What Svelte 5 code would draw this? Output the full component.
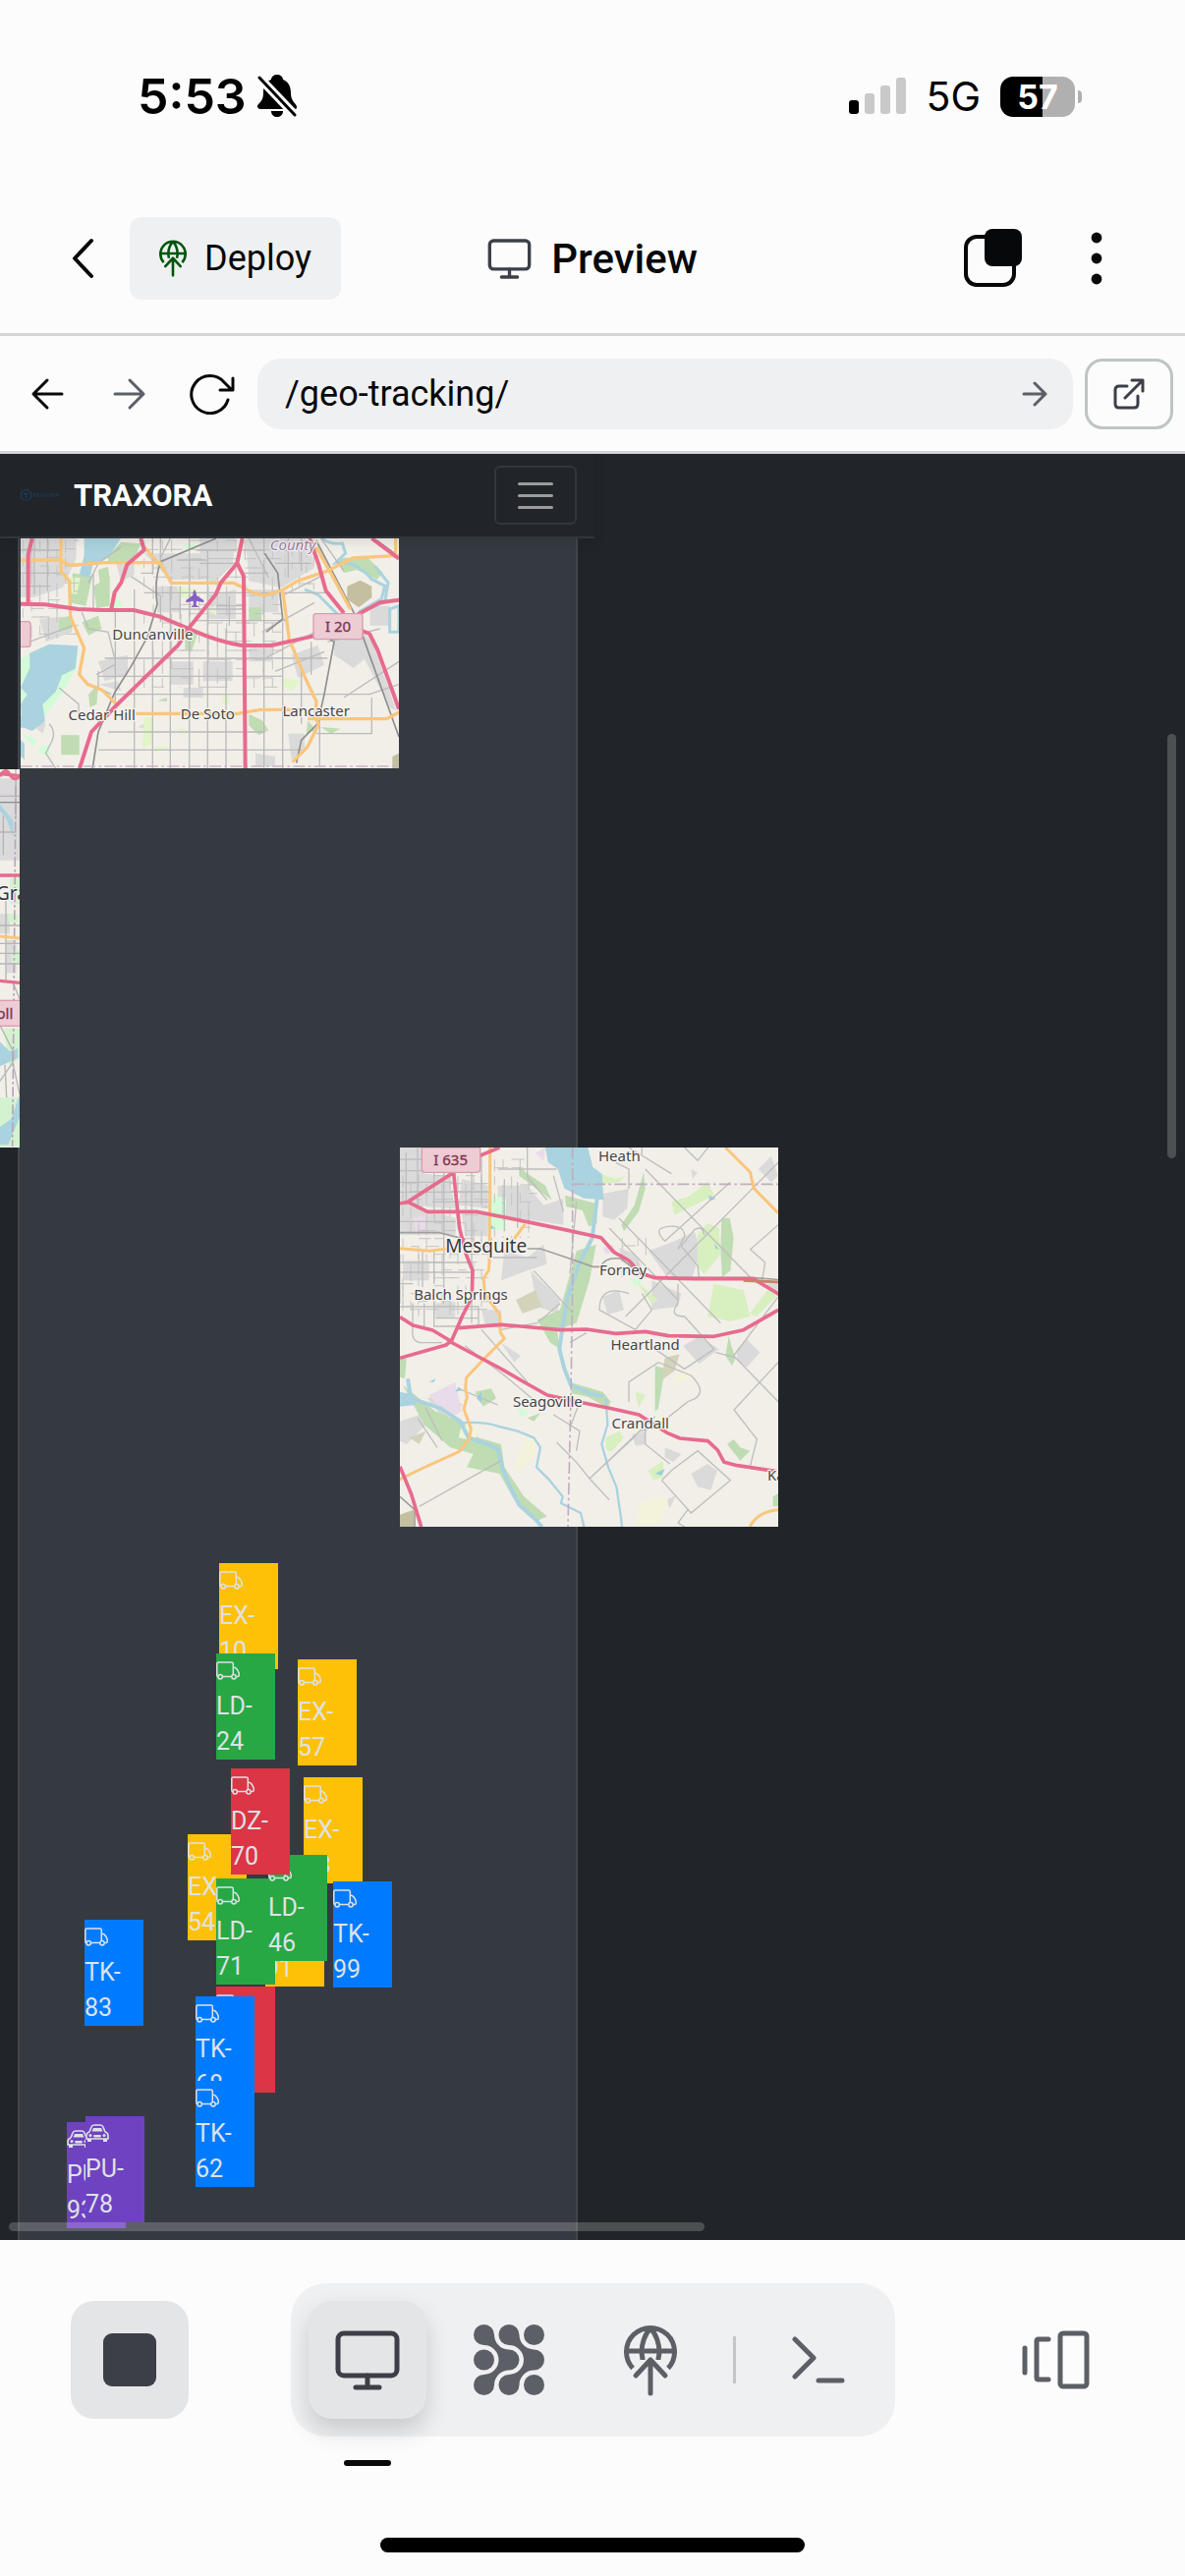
<script>
  let path = $state('/geo-tracking/');

  const markers = [
    { type: 'EX', num: '10', x: 223, y: 1129 },
    { type: 'LD', num: '24', x: 220, y: 1221 },
    { type: 'EX', num: '57', x: 303, y: 1227 },
    { type: 'EX', num: '43', x: 309, y: 1347 },
    { type: 'EX', num: '54', x: 191, y: 1405 },
    { type: 'EX', num: '91', x: 270, y: 1452 },
    { type: 'LD', num: '71', x: 220, y: 1450 },
    { type: 'LD', num: '46', x: 273, y: 1426 },
    { type: 'DZ', num: '70', x: 235, y: 1338 },
    { type: 'TK', num: '99', x: 339, y: 1453 },
    { type: 'TK', num: '83', x: 86, y: 1492 },
    { type: 'DZ', num: '33', x: 220, y: 1560 },
    { type: 'TK', num: '68', x: 199, y: 1570 },
    { type: 'TK', num: '62', x: 199, y: 1656 },
    { type: 'PU', num: '93', x: 68, y: 1698 },
    { type: 'PU', num: '78', x: 87, y: 1692 }
  ];

  const southLabels = [
    { t: 'Duncanville', x: 466, y: 333 },
    { t: 'Cedar Hill', x: 311, y: 580 },
    { t: 'De Soto', x: 634, y: 577 },
    { t: 'Lancaster', x: 965, y: 566 }
  ];

  const eastLabels = [
    { t: 'Heath', x: 691, y: 66 },
    { t: 'Forney', x: 702, y: 414 },
    { t: 'Balch Springs', x: 207, y: 488 },
    { t: 'Heartland', x: 770, y: 643 },
    { t: 'Seagoville', x: 472, y: 816 },
    { t: 'Crandall', x: 755, y: 881 }
  ];

  // Short residential streets scattered over an area, as one path.
  function streets(x0, y0, x1, y1, step) {
    let d = '';
    let n = 7;
    for (let x = x0; x < x1; x += step) {
      for (let y = y0; y < y1; y += step) {
        n = (n * 73 + 41) % 997;
        if (n % 3 === 0) d += `M${x} ${y}v${Math.min(step + (n % 20), y1 - y)}`;
        else if (n % 3 === 1) d += `M${x} ${y}h${Math.min(step + (n % 20), x1 - x)}`;
      }
    }
    return d;
  }
</script>

{#snippet globe()}
  <path d="M9 44.5A24.5 24.5 0 1 1 45 44.5M3 27h48M27 4C21 10 18 20 18 28c0 3 1 5 1 8M27 4c6 6 9 16 9 24 0 3-1 5-1 8" />
  <path d="M27 70V37M12 52l15-16 15 16" stroke-linecap="round" stroke-linejoin="round" />
{/snippet}

{#snippet monitor()}
  <rect x="3" y="3" width="60" height="43" rx="6" />
  <path d="M33 46v12M21 58h24" stroke-linecap="round" />
{/snippet}

<div class="screen">
  <div class="status">
    <div class="clock">
      <span>5:53</span>
      <svg width="40" height="44" viewBox="0 0 40 44" aria-hidden="true">
        <path d="M20 0c3 0 6 2 6 5 6 2 8 8 8 14 0 9 6 10 6 14 0 2-1 2-3 2H3c-3 0-4-3-2-5 3-3 5-5 5-12 0-8 3-11 8-13 0-3 3-5 6-5zM14 37h12c0 4-3 6-6 6s-6-2-6-6z" />
        <path d="M-2-1L42 45" stroke="#fcfcfc" stroke-width="9" />
        <path d="M2 3l36 38" stroke="#000" stroke-width="3" stroke-linecap="round" />
      </svg>
    </div>
    <div class="radio">
      <svg width="58" height="38" viewBox="0 0 58 38" aria-hidden="true">
        <rect y="23" width="10" height="14" rx="3" />
        <g fill="#c9c9c9">
          <rect x="16" y="16" width="10" height="21" rx="3" />
          <rect x="32" y="8" width="10" height="29" rx="3" />
          <rect x="48" width="10" height="37" rx="3" />
        </g>
      </svg>
      <span class="network">5G</span>
      <div class="battery"><span class="level">57</span></div>
    </div>
  </div>

  <header class="header">
    <div class="left">
      <button class="plain" aria-label="Back">
        <svg width="24" height="42" viewBox="0 0 24 42" class="line ink"><path d="M21 3L4 21l17 18" /></svg>
      </button>
      <button class="deploy">
        <svg width="28" height="38" viewBox="0 0 54 73" class="globe green">{@render globe()}</svg>
        Deploy
      </button>
    </div>
    <h1>
      <svg width="45" height="41" viewBox="0 0 66 61" class="monitor">{@render monitor()}</svg>
      Preview
    </h1>
    <div class="right">
      <button class="plain" aria-label="Tabs">
        <svg width="60" height="60" viewBox="0 0 60 60">
          <rect x="2" y="8" width="49" height="49" rx="11" fill="none" stroke="#060809" stroke-width="4" />
          <rect x="21" width="38" height="38" rx="8" fill="#060809" />
        </svg>
      </button>
      <button class="plain" aria-label="More">
        <svg width="12" height="54" viewBox="0 0 12 54" fill="#060809">
          <circle cx="6" cy="6" r="5.4" /><circle cx="6" cy="27" r="5.4" /><circle cx="6" cy="48" r="5.4" />
        </svg>
      </button>
    </div>
  </header>

  <nav class="toolbar" aria-label="Browser">
    <div class="history">
      <button class="plain" aria-label="Go back">
        <svg width="34" height="34" viewBox="0 0 34 34" class="line ink"><path d="M32 17H3M17 3L3 17l14 14" /></svg>
      </button>
      <button class="plain" aria-label="Go forward">
        <svg width="34" height="34" viewBox="0 0 34 34" class="line grey"><path d="M2 17h29M17 3l14 14-14 14" /></svg>
      </button>
      <button class="plain" aria-label="Reload">
        <svg width="46" height="42" viewBox="0 0 46 42" class="line ink"><path d="M39 27A19 19 0 1 1 35 9l8 8M44 5v12H31" /></svg>
      </button>
    </div>
    <div class="url">
      <input aria-label="Path" bind:value={path} />
      <button class="plain" aria-label="Go">
        <svg width="26" height="26" viewBox="0 0 26 26" class="line grey"><path d="M2 13h22M13 2l11 11-11 11" /></svg>
      </button>
    </div>
    <button class="external" aria-label="Open in new tab">
      <svg width="32" height="32" viewBox="0 0 32 32" class="line dark"><path d="M14 8H6q-4 0-4 4v14q0 4 4 4h15q4 0 4-4V18M12 20L30 2M19 2h11v11" /></svg>
    </button>
  </nav>

  <main class="viewport">
    <div class="panel"></div>

    <svg class="tile south" viewBox="63 24 1155 702" font-family="Noto Sans, sans-serif">
      <rect x="63" y="24" width="1155" height="702" fill="#f2efe9" />
      <g fill="#dadada">
        <path d="M63 24h170v60l-40 90-90 30H63zM350 85l60-10v60l-40 20zM440 70h220v80H520zM480 170h70v80h-70zM610 24h110l-10 80-60 60-40-40zM750 24h190l20 90-100 60-100-20zM760 180h90v70h-90zM760 360l80-20-10 60h-70zM890 380l80-30 20 60-80 40zM1020 320l90-10 40 50-70 60-60-40zM300 400l90-20v60l-70 20zM520 400h70v70h-70zM620 400h90v60h-90zM640 200l80-20v90h-80zM120 270l100-10v50l-80 30zM420 600l40-20v30zM300 470l60-10 10 30zM560 480h60v30h-60zM1130 230h60v60h-60zM1100 300l40 50 70 200-20-10-110-210zM880 620h50v50l-40 30zM780 680l60 10v30h-60zM70 540l70 50-10 30-60-50z" />
      </g>
      <g fill="#bfdcb3">
        <path d="M330 75l40-40 60 5-20 50-80 10zM222 130l60 10-20 90-50-10zM285 170l50-30v90l-40 8zM250 280l50-20 10 40-40 20zM180 270l40-10v40l-40 10zM1030 85l90-5 50 50-20 20-60-30-40 10zM187 625h55v60h-55zM760 235h38v38h-38zM760 560l40 20 20 30-30 15-30-30zM270 500l30-30-5 60-20 10zM565 320l40-10-20 60-20-5zM980 600l60 5-30 15zM940 580l25 30-30 10zM300 120l30-10 5 40-30 10zM480 520l30-10v12z" />
      </g>
      <g fill="#d3fbd8"><path d="M63 390l90-45 85 15-5 60-40 70-65 90-40 15-25-20zM350 200l30 30-35 10zM210 370l20 60-15 10zM66 620l50 20-15 20zM120 660l30-5v30h-25zM560 40l40 5-30 20zM430 640l20 10-10 20z" /></g>
      <g fill="#e2f5c8"><path d="M205 140l40 5-10 50-25-5zM540 170l60 10-20 30-30-5zM870 450l50 10-30 30-30-20zM630 240l30-10v30zM470 660h40v8h-40zM440 570h25v80l-30 15zM540 600l30 10-20 15zM680 500h18v30h-18z" /></g>
      <g fill="#aad3df">
        <path d="M257 24h112l-40 60-45 20-10 40-32-8 15-60zM90 375l60-28 88 5-8 70-40 20-20 50-40 40 8 50-40 30-30-12-5-70 20-30-20-20 28-60zM63 640l12 10v50l-12-10zM63 565l30 10 10 25-40 2z" />
        <path d="M985 24q20 20 60 15l10 30-30 30q60-10 110 50l40 20-10 40-70 40 80-30 10-60-40-50M930 180l40 15 30 30 40 40M1190 240l28-10v80h-28z" fill="none" stroke="#aad3df" stroke-width="9" />
      </g>
      <path d="M1060 170l40-18 35 18v35l-40 30-35-25zM1198 690l20-10v46h-20z" fill="#c4bfa0" />
      <path d={streets(440, 30, 860, 480, 28) + streets(70, 30, 240, 330, 26) + streets(870, 30, 960, 180, 22)} fill="none" stroke="#c4c4c4" stroke-width="3" />
      <g fill="none" stroke="#bbb" stroke-width="4">
        <path d="M105 24v170M145 24v160M63 60h120M63 130h120M63 170h90M352 240v340M410 180v546M466 24v110M466 320v406M520 170v556M578 24v702M634 60v666M690 300v426M806 24v50M806 90v636M863 280v446M920 420v170M976 560v160M440 190h560M430 130h40M520 240h230M600 275h280M320 390h680M300 445h560M350 500h780M330 615h480M300 670h620M1050 510l168-110M600 60h120M610 100h110M740 60h70M740 130h80M1135 510v110h-170M860 200l120-60M800 310l160-90M810 390l170-90M840 430l150-60M950 340v100M1000 340l160-40M980 24l70 100M700 200v90M660 230h80M550 170v100M490 24v80M540 90h90M760 24l60 120M880 24v120M920 24v100M850 60h100M840 100h110" />
        <path d="M63 350l160-60M270 160l30-60 70-50M150 590q20 20 10 50l-20 40 30 46M295 440l55-30M300 430v50l40 20M250 250l20 50 60 10 20 80M400 140l90 60v80M285 130v110M180 480l60 50v30M520 24l-30 60M1218 470l-90 30" />
      </g>
      <g fill="none" stroke="#8f8f8f" stroke-width="5">
        <path d="M660 24L490 95q-20 60-10 130l-30 100-50 90-50 80-50 120-25 160M808 70l40 60 15 140-50 40M1005 330l15 10-30 160-20 90-50 50-15 70M965 30l120 230 133 370M1150 30l68 50" />
      </g>
      <path d="M63 720H1218" fill="none" stroke="#c8b4c8" stroke-width="4" stroke-dasharray="36 10 8 10" />
      <g fill="none" stroke="#f9c67d" stroke-width="10" stroke-linejoin="round">
        <path d="M63 90h120l30 16 110-8h165l35 62h190l60 30 35 8 50-14 50-30 90-30 80-40 140-8M186 24v100l26 30 3 110 42 95-15 80 25 30 45 18 50 50M440 50l48 55M863 182l20 150 50 120 33 70-3 50 10 20-35 70-45 45M965 50l45 80 60 110M415 559h310l70-12h130M940 575h240l38-20M1208 24v45" />
      </g>
      <g fill="none" stroke="#e76b8d" stroke-width="12" stroke-linejoin="round">
        <path d="M98 24l-12 50v145M430 24l10 35-52 45-18 55-20 30-10 50M63 224l75 2 100 14 70 3h100l80 20 100 42q80 35 150 46h90l100-22 60-14M740 24l-16 75 20 40 5 587M724 100l-50 60-15 35-80 100-35 55-190 185-75 80-36 111M945 24l28 80 22 80 55 68M1085 260l75-40 58-8M1090 300l38 15 25 50 65 180M1135 24l83 62" />
      </g>
      <g fill="#edccd4" stroke="#d99caf" stroke-width="4"><rect x="957" y="254" width="150" height="78" rx="8" /><rect x="40" y="278" width="53" height="77" rx="8" /></g>
      <path d="M594 180q-6 8-5 18l-21 15v7l22-5 1 12-8 7h24l-8-7 1-12 22 5v-7l-22-15q0-10-6-18z" fill="#8461c4" />
      <g text-anchor="middle" class="halo" font-size="45" fill="#464646">
        {#each southLabels as l}<text x={l.x} y={l.y}>{l.t}</text>{/each}
        <text x="894" y="60" font-style="italic" fill="#9b7fa8">County</text>
      </g>
      <text x="1032" y="310" text-anchor="middle" font-size="45" fill="#7d3350" stroke="#7d3350">I 20</text>
    </svg>

    <svg class="tile west" viewBox="0 38 60 1155" preserveAspectRatio="xMinYMin slice" font-family="Noto Sans, sans-serif">
      <rect y="38" width="60" height="1155" fill="#f2efe9" />
      <path d="M0 66h60v250H0zM0 480h30v60H0zM20 560h30v100H20z" fill="#dadada" />
      <path d="M30 370h30v80H30zM25 480h30v25H25zM35 590h25v40H35zM10 830h50v90l-30 30zM0 1040h60v150H0z" fill="#d3f2cf" />
      <path d="M0 145l40 50v50L20 190 0 165zM0 870l30 30 25-10v30l-55 25zM60 1030v70l-35 85H0v-55l35-25z" fill="#aad3df" />
      <path d="M0 120h60M10 180v120M0 230h50M18 440v240M0 515h60M0 570h60M0 600h60M0 632h60M40 690l20 50M0 820l38 75v40L0 990M15 940l5 100M38 930l22 100M48 38v150" fill="none" stroke="#b5b5b5" stroke-width="4" />
      <path d="M0 139h60" stroke="#8f8f8f" stroke-width="4" />
      <path d="M48 90L38 1190" stroke="#b9a5b9" stroke-width="5" stroke-dasharray="30 8 8 8" />
      <path d="M0 548l60 6" stroke="#f9c67d" stroke-width="9" />
      <path d="M0 52l60 6M0 362h60M0 684l60 6" stroke="#e76b8d" stroke-width="10" />
      <path d="M0 60q15-30 30-6t30 4" fill="none" stroke="#e76b8d" stroke-width="10" />
      <rect x="-60" y="744" width="130" height="78" fill="#edccd4" stroke="#d99caf" stroke-width="4" />
      <text x="-12" y="438" font-size="57" fill="#333" class="halo">Gra</text>
      <text x="40" y="801" text-anchor="end" font-size="45" fill="#7d3350" stroke="#7d3350">Toll</text>
    </svg>

    <svg class="tile east" viewBox="21 24 1155 1158" font-family="Noto Sans, sans-serif">
      <rect x="21" y="24" width="1155" height="1158" fill="#f2efe9" />
      <g fill="#dadada">
        <path d="M21 24h75v80l80 10-10 60-145 60zM100 110h70l20 100-90-5zM210 120l80 20v70l-90-10zM210 225h80v70h-70zM320 140h90l50 60 60-20v80l-200-30zM21 210h70l100 30v50H21zM340 340l70 20 50-40 10 60-60 20-80 30zM420 400l90 90-10 40-60-20zM640 165l80-15-5 60-40 35-35-10zM780 340l80-30 60-30 20 60-30 90-80-20zM690 330l50 20 20 40-60-20zM790 430l90 40-10 40-80 10zM885 630l50-30 60 40-60 45zM1050 640l30-30 40 40-40 45-30-20zM1115 90l40-40 20 60-20 20zM910 1020l50-30 30 20-20 60-40-10zM830 940l50 20-25 25-25-15zM105 790l50-20 60 40-70 30zM21 860l60-20 20 30-60 60-20-10zM270 520h60v60l-50-20zM730 900l40-10v40l-30 5zM835 1100l30-15-20 40zM910 90l20 10-15 20zM330 620l60 40-20 20zM640 480l50-20 15 60-50 15zM130 500l60-5v50h-60zM30 370h80v60H30zM1140 440h36v40z" />
      </g>
      <g fill="#bfdcb3">
        <path d="M385 80l20 20 60 40 20 45-60-45-40-30zM525 170l95 25 3 60-25 10-20-50-50-10zM765 100l5 50-20 70-45 60-8-20 40-60zM1003 240h25l12 60-10 100-25 20-5-80zM560 340l60-20-20 110-40 130-60 20 10 60-30-20-40-70 70-30zM21 660l20 10-5 60-15-5zM30 750l100 80 70 20 60 60 70 20 10 70 60 90 70 60-30 15-70-65-45-80-100-20 20-40-70-20-80-70zM540 740l100 30 25 30-10 20-60-35-50-10zM800 690l30 10-20 120-10 10zM1020 930l20-15 20 25 30 10-30 30zM410 850l40-15-20 25zM250 770l50-10 15 30-40 25zM1160 1090l16-10v40h-16zM1015 660l10-60 20 70-10 20z" />
      </g>
      <g fill="#d8efbf"><path d="M850 190l50-15 60-45 20 40-80 40-40 20zM930 290l30-35 35 15 5 80-50 60-20-20zM980 440l90 20 20 80-60 15-70-15zM1090 530l60-80 20 30-60 60zM650 910l40-20 15 20-40 45-15-10zM780 1010l45-30v50l-30 10zM620 100l60 20 30-10-20 20-60 5zM740 430l70 60-20 10zM740 770l30 10-20 40z" /></g>
      <g fill="#e9dcea"><path d="M435 40l30-15-5 40zM60 240l40-10v40l-30 10zM110 780l80-40 20 90-40 20zM640 330l30-10 10 20-30 10z" /></g>
      <g fill="#f2f3da"><path d="M370 1000l30-80 40-10-10 60-40 40zM750 1110l60-20 30 10-20 70-80 10zM860 720l50-15-10 30-40 10zM210 870l50 20-10 30-50-10z" /></g>
      <path d="M300 175h45v100h-45zM380 820l40 10-30 20zM720 420l40 10-20 20z" fill="#d3fbd8" />
      <path d="M375 490l60-30 20 50-60 20zM830 665l45-10-15 50-40 30zM50 910l50-20-20 40z" fill="#d3d3bb" />
      <path d="M21 1145l42-15v52H21z" fill="#c4bfa0" />
      <path d="M465 24h130l15 60 28 20 5 80-60-5-60-30-20-60-30-20zM21 770l45 10 5 30-50 5z" fill="#aad3df" />
      <g fill="none" stroke="#aad3df" stroke-linejoin="round">
        <path d="M623 180l-15 120-40 80-35 100-15 90-10 70 15 60 20 50 60 25 40 10" stroke-width="12" />
        <path d="M45 730l10 60 90 30 60 40 25 50 60 20 30 15 15 60 20 50 30 60 50 45 20 22" stroke-width="12" />
        <path d="M200 865q80-5 120 10l60 15 50 20 20 30-12 60 40 40 40 50-5 20 60 30 10 42M650 790l5 80-18 60 20 70 25 60 12 80 5 42" stroke-width="7" />
      </g>
      <path d="M190 770l10-15 12 10zM255 790l15-20v35zM800 1020l30-15-10 20zM980 315l15 20-10-3zM965 170l20 10-20 8zM290 250l20 20-15 5zM110 740l20-10-5 10z" fill="#9bcde0" />
      <path d={streets(30, 110, 290, 540, 24) + streets(310, 60, 440, 300, 26) + streets(700, 300, 780, 420, 24)} fill="none" stroke="#c4c4c4" stroke-width="3" />
      <g fill="none" stroke="#bebebe" stroke-width="4">
        <path d="M40 40v160M75 24v190M125 100v120M155 100v400M240 60v500M270 40v160M340 120v160M380 130v140M21 60h80M21 95h100M21 130h160M21 160h280M120 190h180M21 250h170M21 375h210M21 405h220M21 440h40M60 500v80q-5 40 30 40h60M95 500v70M125 490v80h80M21 510h240v60M130 545h130M21 350v150M90 340v110M125 340v100M300 300v60h140M320 90h180M410 24v90l60 70" />
        <path d="M720 24l130 80M680 70l40 20v60M770 90L1090 420M690 240L1000 560M660 270l210 220M1176 70L710 540M830 310q-40-40 10-45t50 30l-20 40M950 290q-5-30-30-15l-40 50 50 60 5 40M720 470q-90-30-90 50l110 60 50-60-30-50M870 440v60q-30 40 20 40l90 100-90 60-90-60M1176 680l-135 145 70 90-20 80M1040 660l136-180M1040 660l136 140M985 650l60 15M600 1035l200-190M600 1035l60 65M720 800v-60l90-60 100 40q60 60-10 80l-100 80-50 10M500 925l60 60 40 50 140-130M490 840l80 50-10 60M570 800l-30 80M1176 260l-85 75 45 40-10 60M890 24l40 40 40-50M830 310l200-180M820 1040l30-30 80-60 100 90-120 100-90-100M900 1130l-30 40 20 12M340 720l120 100M200 760l120 50M270 580l140 160M330 580l110-20 70-60M430 400l120 130M540 620l50-30M770 880v50l75 60M80 1120l250-140M75 850l60 90M21 1040l30-20M100 820l50 100M490 110l30 110M760 24v20M220 630l120 90M560 190l-20 220" />
      </g>
      <g fill="none" stroke="#a0a09c" stroke-width="5"><path d="M21 284h120l80 20M410 333h40l80 27 80 28h25q10-30 60-25l40 30 60 28h300l100 8M21 1090l45 40v52" /></g>
      <path d="M548 24v430l-5 330-9 398M548 136h628" fill="none" stroke="#c0aec0" stroke-width="5" stroke-dasharray="36 10 8 10" />
      <g fill="none" stroke="#f9c67d" stroke-width="9" stroke-linejoin="round">
        <path d="M296 24v150l-2 200-2 25-16 25 5 50 45 60 2 55 12 18-60 60-56 60-3 30 5 30-10 35 22 60-5 30-30 40-110 50-72 35M403 258l-33 45M21 332l90 8 60-8M1015 24l75 75 12 50 74 75M1090 1182q20-45 86-52" />
      </g>
      <g fill="none" stroke="#e76b8d" stroke-width="11" stroke-linejoin="round">
        <path d="M325 24l-60 25M185 100L45 190l-24 5M45 190l60 30h150l150 30 130 27 100 22 40 45 45 25 35 38 45 15 120 3h180l96 58M185 100l8 80 10 90 20 80 20 50-2 80-30 60-35 80M21 542l40 25 60 15 55 33-14 12-141 40M200 575l130-10 60 5 120 11 80-2 90 13 90-6 70 13 140 2 90-20 106-61M176 618l160 85 60 35 75 42 100 22 100 20 80 18 85 55 40 17 85 8 30 28 20 37 40 10 120 18M21 998l35 85 30 99" />
      </g>
      <path d="M1070 430l106 5" stroke="#c8836f" stroke-width="9" />
      <path d="M88 24h178v66q0 10-10 10H98q-10 0-10-10z" fill="#edccd4" stroke="#d99caf" stroke-width="4" />
      <g text-anchor="middle" class="halo" font-size="45" fill="#464646">
        {#each eastLabels as l}<text x={l.x} y={l.y}>{l.t}</text>{/each}
        <text x="284" y="346" font-size="57" fill="#3a3a3a">Mesquite</text>
        <text x="1143" y="1042" text-anchor="start">Kaufman</text>
      </g>
      <text x="176" y="79" text-anchor="middle" font-size="45" fill="#7d3350" stroke="#7d3350">I 635</text>
    </svg>

    {#each markers as m}
      <div class="marker {m.type}" style="left:{m.x}px;top:{m.y}px">
        <span class="glyph">
          <svg width="24" height="20" viewBox="0 0 24 20">
            {#if m.type === 'PU'}
              <g fill="none" stroke="#dee2e6" stroke-width="1.6">
                <path d="M4 8l2-5q.6-2 3-2h6q2.400 0 3 2l2 5M4 8q-3 1-3 3.500V15h22v-3.500Q23 9 20 8M8.500 12h7" />
              </g>
              <path d="M6.500 7.500L8 4h8l1.500 3.500zM2 15h4v3H2zM18 15h4v3h-4zM8.500 11h7v2.500h-7z" fill="#dee2e6" />
              <circle cx="5" cy="11.500" r="1.500" fill="#dee2e6" /><circle cx="19" cy="11.500" r="1.500" fill="#dee2e6" />
            {:else}
              <g fill="none" stroke="#dee2e6" stroke-width="1.500">
                <path d="M2 15.500Q.8 15.500.8 14V2.500Q.8 1 2.200 1h13.600q1.500 0 1.500 1.500v11.500M6.300 15.500h9.400M17.300 6q3.700 0 5.900 6v2.500q0 1-1.200 1h-1.500" />
                <circle cx="4.200" cy="15.800" r="2.200" /><circle cx="18" cy="15.800" r="2.200" />
              </g>
            {/if}
          </svg>
        </span>
        <span>{m.type}-</span>
        <span>{m.num}</span>
      </div>
    {/each}

    <div class="navbar">
      <a href="#home" class="brand">
        <svg width="39" height="14" viewBox="0 0 39 14" aria-hidden="true">
          <path d="M5.500 1l5 3v6l-5 3-5-3V4zM3 5.500h5M5.500 5.500V10" fill="none" stroke="#1b4164" />
          <text x="12" y="9" font-size="6" font-weight="700" fill="#1a3550" font-family="Roboto, sans-serif">TRAXORA</text>
        </svg>
        TRAXORA
      </a>
      <button class="burger" aria-label="Toggle navigation"><i></i><i></i><i></i></button>
    </div>

    <div class="vbar"></div>
    <div class="hbar"></div>
  </main>

  <footer class="dock">
    <div class="controls">
      <button class="tool stop" aria-label="Stop"><span></span></button>
      <div class="tabs">
        <button class="tool active" aria-label="Preview">
          <svg width="66" height="61" viewBox="0 0 66 61" class="monitor">{@render monitor()}</svg>
        </button>
        <button class="tool" aria-label="Agent">
          <svg width="72" height="72" viewBox="0 0 72 72" fill="#5c5f66">
            <path id="fold" d="M10.500 0A10.500 10.500 0 0 1 21 10.500A15 15 0 0 0 36 25.500A10.500 10.500 0 0 1 36 46.500A15 15 0 0 0 21 61.500A10.500 10.500 0 1 1 10.500 51A15 15 0 0 0 10.500 21A10.500 10.500 0 0 1 10.500 0Z" />
            <use href="#fold" x="25.500" />
            <circle cx="10.500" cy="36" r="10.500" /><circle cx="61.500" cy="10.500" r="10.500" /><circle cx="61.500" cy="61.500" r="10.500" />
          </svg>
        </button>
        <button class="tool" aria-label="Deployments">
          <svg width="54" height="73" viewBox="0 0 54 73" class="globe">{@render globe()}</svg>
        </button>
        <span class="rule"></span>
        <button class="tool" aria-label="Shell">
          <svg width="54" height="48" viewBox="0 0 54 48" class="line thick grey"><path d="M3 3l19 19L3 41M27 45h24" /></svg>
        </button>
      </div>
      <button class="tool end" aria-label="Switch tabs">
        <svg width="70" height="60" viewBox="0 0 70 60" class="line thick grey"><path d="M4 18v25M28 9H18q-2 0-2 2v37q0 2 2 2h10" /><rect x="40" y="3" width="27" height="54" rx="3" /></svg>
      </button>
    </div>
    <div class="home"></div>
  </footer>
</div>

<style>
  :global(body) {
    background: #fcfcfc;
  }
  .screen {
    display: flex;
    flex-direction: column;
    min-height: 100vh;
    font-family: Roboto, sans-serif;
    color: #060809;
  }
  svg {
    display: block;
    flex: none;
  }
  button {
    font: inherit;
    color: inherit;
    padding: 0;
    border: 0;
    background: none;
    display: flex;
    align-items: center;
    justify-content: center;
  }
  .line {
    fill: none;
    stroke-width: 3;
    stroke-linecap: round;
    stroke-linejoin: round;
  }
  .header .line {
    stroke-width: 4;
  }
  .thick {
    stroke-width: 5;
  }
  .ink {
    stroke: #060809;
  }
  .grey {
    stroke: #5c5f66;
  }
  .dark {
    stroke: #3c3f47;
  }
  .globe {
    fill: none;
    stroke: #5c5f66;
    stroke-width: 5;
  }
  .green {
    stroke: #00540d;
  }
  .monitor {
    fill: none;
    stroke: #3c3f47;
    stroke-width: 5;
  }
  .status {
    height: 187px;
    padding: 9px 112px 0 140px;
    box-sizing: border-box;
    display: flex;
    align-items: center;
    justify-content: space-between;
    font-family: Inter, sans-serif;
    color: #000;
  }
  .clock,
  .radio {
    display: flex;
    align-items: center;
  }
  .clock {
    gap: 11px;
    font-size: 50px;
    font-weight: 600;
  }
  .network {
    font-size: 41px;
    margin: 0 20px;
  }
  .battery {
    position: relative;
    width: 76px;
    height: 41px;
    border-radius: 13px;
    background: linear-gradient(90deg, #000 57%, #b0b0b0 57%);
    color: #fff;
    font-size: 34px;
    font-weight: 700;
    display: flex;
    align-items: center;
    justify-content: center;
  }
  .battery::after {
    content: '';
    position: absolute;
    left: 79px;
    top: 14px;
    width: 4px;
    height: 13px;
    border-radius: 0 6px 6px 0;
    background: #b0b0b0;
  }
  .header {
    height: 152px;
    padding: 0 84px 0 72px;
    display: grid;
    grid-template-columns: 1fr auto 1fr;
    align-items: center;
    border-bottom: 3px solid #d5d5d6;
  }
  .left,
  .right {
    display: flex;
    align-items: center;
  }
  .left {
    gap: 36px;
  }
  .right {
    justify-content: flex-end;
    gap: 69px;
  }
  .deploy {
    height: 84px;
    padding: 0 30px;
    gap: 18px;
    border-radius: 12px;
    background: #eff0f2;
    font-size: 36px;
  }
  h1 {
    margin: 0;
    display: flex;
    align-items: center;
    gap: 20px;
    font-size: 42px;
    font-weight: 500;
    padding-left: 12px;
  }
  .toolbar {
    height: 117px;
    padding: 0 12px 0 6px;
    display: flex;
    align-items: center;
    border-bottom: 3px solid #d5d5d6;
  }
  .history {
    display: flex;
    margin-right: 4px;
  }
  .history button {
    width: 84px;
    height: 72px;
  }
  .url {
    flex: 1;
    height: 72px;
    margin-right: 12px;
    padding: 0 26px 0 28px;
    border-radius: 24px;
    background: #eff0f2;
    display: flex;
    align-items: center;
  }
  input {
    flex: 1;
    min-width: 0;
    padding: 0;
    border: 0;
    background: none;
    outline: 0;
    color: inherit;
    font: 36px Roboto, sans-serif;
  }
  .external {
    width: 90px;
    height: 72px;
    border: 3px solid #bfc4c4;
    border-radius: 18px;
  }
  .viewport {
    flex: 1;
    min-height: 1818px;
    position: relative;
    overflow: hidden;
    background: #212529;
  }
  .panel {
    position: absolute;
    inset: 0 auto 0 18px;
    width: 566px;
    border: solid #41464d;
    border-width: 0 2px;
    background: #353a41;
  }
  .tile {
    position: absolute;
  }
  .south {
    left: 21px;
    top: 86px;
    width: 385px;
    height: 234px;
  }
  .west {
    left: 0;
    top: 321px;
    width: 20px;
    height: 385px;
  }
  .east {
    left: 407px;
    top: 706px;
    width: 385px;
    height: 386px;
  }
  .halo {
    paint-order: stroke;
    stroke: #f6f4f0;
    stroke-width: 7px;
    stroke-linejoin: round;
  }
  .marker {
    position: absolute;
    width: 60px;
    display: flex;
    flex-direction: column;
    font-size: 25px;
    line-height: 36px;
    color: #dee2e6;
  }
  .glyph {
    height: 36px;
    display: flex;
    align-items: center;
  }
  .EX {
    background: #ffc107;
  }
  .LD {
    background: #28a745;
  }
  .DZ {
    background: #dc3545;
  }
  .TK {
    background: #007bff;
  }
  .PU {
    background: #6f42c1;
  }
  .navbar {
    position: absolute;
    top: 0;
    left: 0;
    width: 100%;
    max-width: 605px;
    height: 86px;
    box-sizing: border-box;
    padding: 0 18px 0 21px;
    display: flex;
    align-items: center;
    justify-content: space-between;
    background: #212529;
    border-bottom: 2px solid #31363b;
    box-shadow: 0 3px 12px rgba(0, 0, 0, 0.1);
  }
  .brand {
    display: flex;
    align-items: center;
    gap: 15px;
    color: #fff;
    font-size: 31px;
    font-weight: 700;
    text-decoration: none;
  }
  .burger {
    width: 84px;
    height: 60px;
    border: 2px solid #32373b;
    border-radius: 6px;
    flex-direction: column;
    gap: 9px;
  }
  .burger i {
    width: 36px;
    height: 3px;
    border-radius: 2px;
    background: #9a9c9e;
  }
  .vbar,
  .hbar {
    position: absolute;
    border-radius: 5px;
    background: rgba(255, 255, 255, 0.2);
  }
  .vbar {
    right: 9px;
    top: 285px;
    width: 9px;
    height: 432px;
  }
  .hbar {
    left: 9px;
    bottom: 9px;
    width: 708px;
    height: 9px;
  }
  .dock {
    height: 342px;
    box-sizing: border-box;
    padding: 44px 72px 24px;
    display: flex;
    flex-direction: column;
    justify-content: space-between;
    align-items: center;
  }
  .controls {
    width: 100%;
    display: grid;
    grid-template-columns: 1fr auto 1fr;
    align-items: center;
  }
  .tabs {
    display: flex;
    align-items: center;
    gap: 24px;
    padding: 18px;
    border-radius: 36px;
    background: #eff0f2;
  }
  .tool {
    position: relative;
    width: 120px;
    height: 120px;
    border-radius: 24px;
  }
  .end {
    justify-self: end;
  }
  .stop,
  .active {
    background: #e4e5e7;
  }
  .stop span {
    width: 54px;
    height: 54px;
    border-radius: 9px;
    background: #3c3f47;
  }
  .active {
    box-shadow: 0 12px 24px rgba(0, 0, 0, 0.16);
  }
  .active::after {
    content: '';
    position: absolute;
    left: 36px;
    top: 162px;
    width: 48px;
    height: 6px;
    border-radius: 3px;
    background: #060809;
  }
  .rule {
    width: 3px;
    height: 48px;
    background: #c5c6c8;
  }
  .home {
    width: 432px;
    height: 15px;
    border-radius: 8px;
    background: #000;
  }
</style>
